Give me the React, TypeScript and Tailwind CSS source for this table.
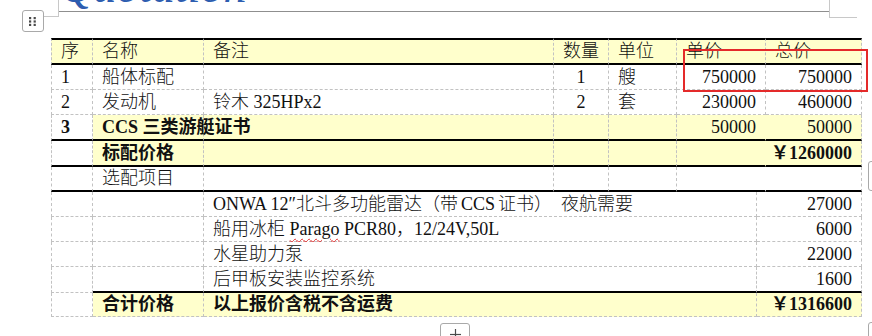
import React from 'react';
import clsx from 'clsx';

type Align = 'left' | 'right' | 'center';

interface CellProps {
  span?: 1 | 2 | 4;
  align?: Align;
  yellow?: boolean;
  bold?: boolean;
  thickTop?: boolean;
  thickBottom?: boolean;
  hideRight?: boolean;
  first?: boolean;
  over?: boolean;
  children?: React.ReactNode;
}

const Cell: React.FC<CellProps> = ({
  span = 1,
  align = 'left',
  yellow,
  bold,
  thickTop,
  thickBottom,
  hideRight,
  first,
  over,
  children
}) => (
  <div
    className={clsx(
      'flex items-center whitespace-nowrap border-r border-b border-dashed border-[#c2c2c2]',
      span === 2 && 'col-span-2',
      span === 4 && 'col-span-4',
      align === 'left' && 'justify-start pl-[9px]',
      align === 'right' && 'justify-end pr-[9px]',
      align === 'center' && 'justify-center',
      yellow ? 'bg-[#ffffcc]' : 'bg-white',
      bold ? 'font-bold' : 'font-light',
      thickTop && 'border-t-2 [border-top-style:solid] border-t-black',
      thickBottom && 'border-b-2 [border-bottom-style:solid] border-b-black',
      hideRight && 'border-r-transparent',
      first && 'border-l',
      over && 'relative z-10'
    )}
  >
    {children}
  </div>
);

// small gray rounded handle like the editor draws round a table
const Handle: React.FC<{ className: string; children?: React.ReactNode }> = ({ className, children }) => (
  <div className={clsx('absolute rounded-[3px] border border-[#a9a9a9] bg-white', className)}>{children}</div>
);

export default function App() {
  return (
    <div className="relative w-[872px] h-[336px] overflow-hidden bg-white text-[18px] text-[#111] font-['Liberation_Serif','Noto_Sans_CJK_SC',serif]">
      {/* heading scrolled out of view */}
      <div className="ml-[58px] w-[772px] h-[12px] overflow-hidden border-b border-[#8f8f8f]">
        <div className="-mt-[35px] ml-[2px] text-[46px] leading-[44px] italic text-[#2d5db0] font-['Liberation_Serif',serif]">
          Quotation
        </div>
      </div>

      {/* quotation table */}
      <div className="ml-[51px] mt-[26px] grid grid-cols-[42px_111px_350px_55px_68px_80px_9px_96px] grid-rows-[27px_25px_25px_26px_26px_25px_25px_25px_25px_26px_24px]">
        {/* header */}
        <Cell first yellow thickTop thickBottom>序</Cell>
        <Cell yellow thickTop thickBottom>名称</Cell>
        <Cell yellow thickTop thickBottom>备注</Cell>
        <Cell yellow thickTop thickBottom>数量</Cell>
        <Cell yellow thickTop thickBottom>单位</Cell>
        <Cell span={2} yellow thickTop thickBottom>单价</Cell>
        <Cell yellow thickTop thickBottom>总价</Cell>

        {/* 1 */}
        <Cell first>1</Cell>
        <Cell>船体标配</Cell>
        <Cell />
        <Cell align="center">1</Cell>
        <Cell>艘</Cell>
        <Cell span={2} align="right">750000</Cell>
        <Cell align="right">750000</Cell>

        {/* 2 */}
        <Cell first>2</Cell>
        <Cell>发动机</Cell>
        <Cell>铃木 325HPx2</Cell>
        <Cell align="center">2</Cell>
        <Cell>套</Cell>
        <Cell span={2} align="right">230000</Cell>
        <Cell align="right">460000</Cell>

        {/* 3 */}
        <Cell first bold thickBottom>3</Cell>
        <Cell yellow bold over thickBottom>CCS 三类游艇证书</Cell>
        <Cell yellow thickBottom />
        <Cell yellow thickBottom />
        <Cell yellow thickBottom />
        <Cell span={2} align="right" yellow hideRight thickBottom>50000</Cell>
        <Cell align="right" yellow thickBottom>50000</Cell>

        {/* 标配价格 */}
        <Cell first thickBottom />
        <Cell yellow bold thickBottom>标配价格</Cell>
        <Cell yellow thickBottom />
        <Cell yellow thickBottom />
        <Cell yellow thickBottom />
        <Cell span={2} yellow hideRight thickBottom />
        <Cell align="right" yellow bold thickBottom>￥1260000</Cell>

        {/* 选配项目 */}
        <Cell first thickBottom />
        <Cell thickBottom>选配项目</Cell>
        <Cell thickBottom />
        <Cell thickBottom />
        <Cell thickBottom />
        <Cell span={2} hideRight thickBottom />
        <Cell thickBottom />

        {/* options */}
        <Cell first />
        <Cell />
        <Cell span={4}>ONWA 12″北斗多功能雷达（带<span className="mx-[3px]">CCS</span>证书）　夜航需要</Cell>
        <Cell span={2} align="right">27000</Cell>

        <Cell first />
        <Cell />
        <Cell span={4}>
          船用冰柜&nbsp;<span className="underline decoration-wavy decoration-[#e03030] decoration-1 underline-offset-[3px]">Parago</span>&nbsp;PCR80，12/24V,50L
        </Cell>
        <Cell span={2} align="right">6000</Cell>

        <Cell first />
        <Cell />
        <Cell span={4}>水星助力泵</Cell>
        <Cell span={2} align="right">22000</Cell>

        <Cell first />
        <Cell thickBottom />
        <Cell span={4} thickBottom>后甲板安装监控系统</Cell>
        <Cell span={2} align="right" thickBottom>1600</Cell>

        {/* total */}
        <Cell first />
        <Cell yellow bold>合计价格</Cell>
        <Cell span={4} yellow bold>以上报价含税不含运费</Cell>
        <Cell span={2} align="right" yellow bold>￥1316600</Cell>
      </div>

      {/* editor chrome: table move handle, corner marks, add-row buttons */}
      <div className="absolute left-[58px] top-0 w-px h-[17px] bg-[#c8c8c8]" />
      <div className="absolute left-[43px] top-[16px] w-[16px] h-px bg-[#c8c8c8]" />
      <div className="absolute left-[829px] top-0 w-px h-[18px] bg-[#c8c8c8]" />
      <div className="absolute left-[829px] top-[17px] w-[28px] h-px bg-[#c8c8c8]" />

      <Handle className="left-[22px] top-[10px] w-[22px] h-[22px] flex items-center justify-center">
        <svg width="8" height="9" viewBox="0 0 8 9" fill="#4a4a4a">
          <rect x="0" y="0" width="2.2" height="2.2" />
          <rect x="4.6" y="0" width="2.2" height="2.2" />
          <rect x="0" y="3.4" width="2.2" height="2.2" />
          <rect x="4.6" y="3.4" width="2.2" height="2.2" />
          <rect x="0" y="6.8" width="2.2" height="2.2" />
          <rect x="4.6" y="6.8" width="2.2" height="2.2" />
        </svg>
      </Handle>

      <Handle className="left-[440px] top-[323px] w-[30px] h-[22px]">
        <svg className="mx-auto mt-[5px]" width="11" height="11" viewBox="0 0 11 11" stroke="#4a4a4a" strokeWidth="1.2">
          <line x1="5.5" y1="0" x2="5.5" y2="11" />
          <line x1="0" y1="5.5" x2="11" y2="5.5" />
        </svg>
      </Handle>
      <Handle className="left-[868px] top-[161px] w-[22px] h-[30px]" />
      <Handle className="left-[868px] top-[322px] w-[22px] h-[22px]" />

      {/* red annotation box */}
      <div className="absolute left-[683px] top-[49px] w-[185px] h-[43px] border-2 border-[#e42a2a]" />
    </div>
  );
}
